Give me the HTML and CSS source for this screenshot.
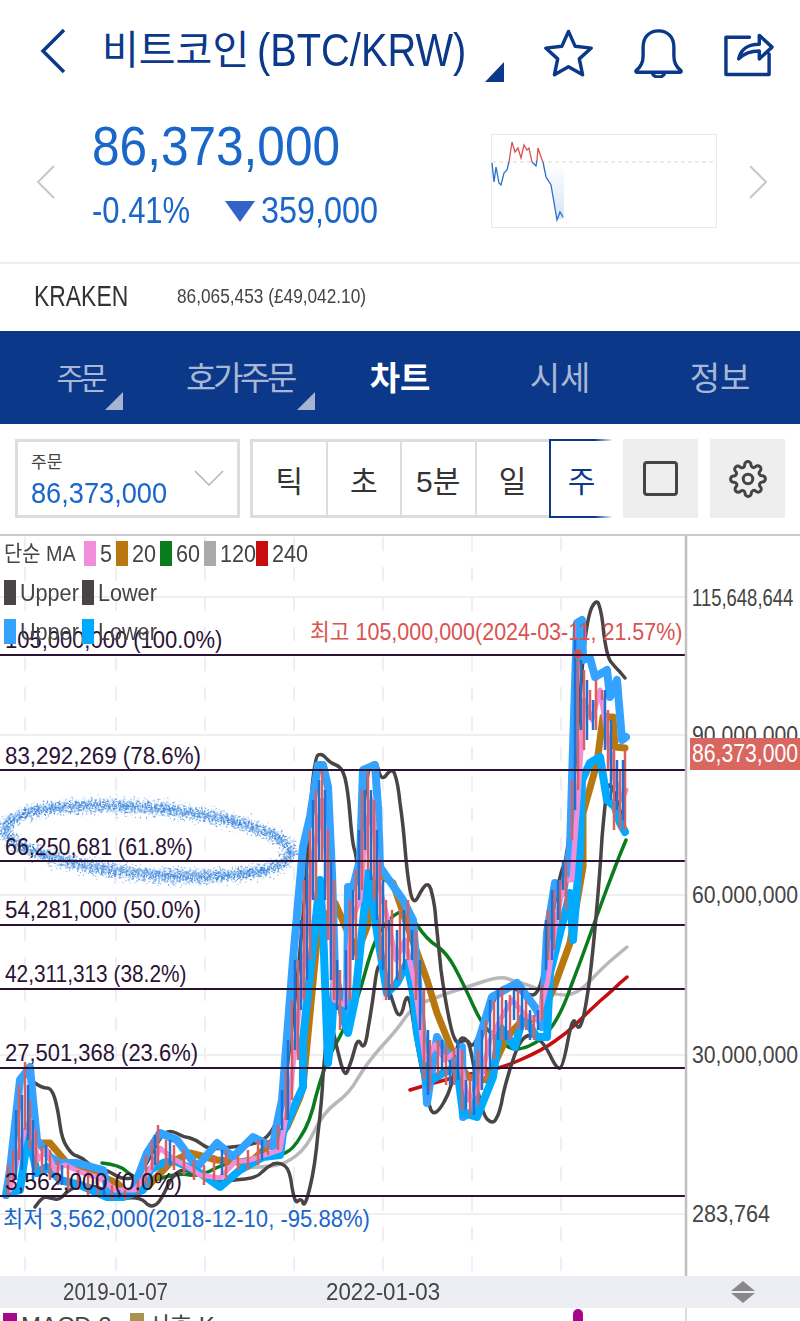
FILE: index.html
```html
<!DOCTYPE html>
<html lang="ko">
<head>
<meta charset="utf-8">
<title>비트코인(BTC/KRW)</title>
<link rel="stylesheet" href="styles.css">
</head>
<body>
<div class="page">
  <header class="topbar">
    <svg class="back" viewBox="0 0 26 46"><path d="M24 2 3 23l21 21"/></svg>
    <h1 class="title">비트코인<span class="t-en">(BTC/KRW)</span></h1>
    <span class="corner corner-title"></span>
    <div class="top-icons">
      <svg class="ic" viewBox="0 0 52 50"><path d="M26 3l6.800 15.200 16.400 1.800-12.200 11 3.400 16.200L26 39l-14.400 8.200L15 31 2.800 20l16.400-1.800z"/></svg>
      <svg class="ic" viewBox="0 0 52 52"><path d="M3 44c5-4 7-9 7-15v-9C10 10 16 3 26 3s16 7 16 17v9c0 6 2 11 7 15 1 1 .5 2-1 2H4c-1.500 0-2-1-1-2zM19 46c1 3 3 5 7 5s6-2 7-5"/></svg>
      <svg class="ic" viewBox="0 0 52 50"><path d="M27 9H3v38h44V26M16 31c2-10 10-15 21-15V7l13 12-13 12v-8c-9 0-15 2-21 8z"/></svg>
    </div>
  </header>

  <section class="quote">
    <svg class="nav-arrow" viewBox="0 0 20 34"><path d="M18 1 2 17l16 16"/></svg>
    <div class="quote-main">
      <div class="price"><span class="price-num">86,373,000</span></div>
      <div class="delta">
        <span class="pct">-0.41%</span>
        <span class="down"></span>
        <span class="amt">359,000</span>
      </div>
    </div>
    <svg class="spark" viewBox="491 134 226 94">
      <defs><linearGradient id="sg" x1="0" y1="0" x2="0" y2="1"><stop offset="0" stop-color="#fff"/><stop offset="1" stop-color="#d5e5f7"/></linearGradient></defs>
      <rect x="491.500" y="134.500" width="225" height="93" fill="#fff" stroke="#e9e9e9"/>
      <path d="M544 163H564V219H557L551 186 546 177z" fill="url(#sg)"/>
      <path d="M492 162H716" stroke="#e6e6e6" stroke-width="1.500" stroke-dasharray="4 3" fill="none"/>
      <path d="M492 163 494 182 496 167 499 183 501 185 504 173 507 170 509 162M532 162 536 166 537 160M543 162 546 177 551 185 557 220 560 212 563 217" stroke="#2a6fcb" stroke-width="1.300" fill="none"/>
      <path d="M509 162 512 142 515 152 518 148 521 158 524 145 527 150 529 148 532 162M537 160 538 148 541 157 543 162" stroke="#d9534f" stroke-width="1.300" fill="none"/>
    </svg>
    <svg class="nav-arrow nav-next" viewBox="0 0 20 34"><path d="M2 1l16 16L2 33"/></svg>
  </section>

  <section class="exchange">
    <span class="ex-name">KRAKEN</span>
    <span class="ex-val">86,065,453 (£49,042.10)</span>
  </section>

  <nav class="tabs">
    <div class="tab tab-first">주문<span class="corner corner-tab"></span></div>
    <div class="tab tab-second">호가주문<span class="corner corner-tab"></span></div>
    <div class="tab active">차트</div>
    <div class="tab">시세</div>
    <div class="tab">정보</div>
  </nav>

  <section class="toolbar">
    <div class="select">
      <div class="sel-text">
        <div class="sel-label">주문</div>
        <div class="sel-price">86,373,000</div>
      </div>
      <svg class="sel-chev" viewBox="0 0 30 17"><path d="M1 1l14 14L29 1"/></svg>
    </div>
    <div class="periods">
      <div class="period">틱</div>
      <div class="period">초</div>
      <div class="period">5분</div>
      <div class="period">일</div>
      <div class="period on">주</div>
    </div>
    <div class="tool"><span class="square"></span></div>
    <div class="tool">
      <svg class="gear" viewBox="0 0 24 24"><circle cx="12" cy="12" r="3"/><path d="M19.400 15a1.650 1.650 0 0 0 .33 1.820l.06.06a2 2 0 1 1-2.830 2.830l-.06-.06a1.650 1.650 0 0 0-2.800 1.170V21a2 2 0 0 1-4 0v-.09A1.650 1.650 0 0 0 7.300 19.740l-.06.06a2 2 0 1 1-2.830-2.830l.06-.06a1.650 1.650 0 0 0-1.170-2.800H3a2 2 0 0 1 0-4h.09A1.650 1.650 0 0 0 4.260 7.300l-.06-.06a2 2 0 1 1 2.830-2.830l.06.06a1.650 1.650 0 0 0 2.800-1.170V3a2 2 0 0 1 4 0v.09a1.650 1.650 0 0 0 2.800 1.170l.06-.06a2 2 0 1 1 2.830 2.830l-.06.06a1.650 1.650 0 0 0 1.170 2.800H21a2 2 0 0 1 0 4h-.09a1.650 1.650 0 0 0-1.510 1z"/></svg>
    </div>
  </section>

  <section class="chart">
    <svg class="plot" viewBox="0 536 800 740">
      <defs>
        <filter id="spray" filterUnits="userSpaceOnUse" x="-30" y="770" width="360" height="140">
          <feTurbulence type="fractalNoise" baseFrequency="0.5" numOctaves="2" seed="7"/>
          <feDisplacementMap in="SourceGraphic" scale="22" xChannelSelector="R" yChannelSelector="G"/>
        </filter>
      </defs>
      <g class="grid-h">
        <path d="M0 597H685M0 735H685M0 895H685M0 1055H685M0 1214H685"/>
      </g>
      <g class="grid-v">
        <path d="M25 537V1276M116 537V1276M205 537V1276M294 537V1276M383 537V1276M472 537V1276M561 537V1276"/>
      </g>

      <g class="spray" filter="url(#spray)" transform="rotate(5 148 841)">
        <ellipse cx="148" cy="841" rx="139" ry="29" class="s1"/>
        <ellipse cx="148" cy="841" rx="142" ry="32" class="s2"/>
        <ellipse cx="148" cy="841" rx="145" ry="35" class="s3"/>
        <ellipse cx="148" cy="841" rx="148" ry="38" class="s4"/>
      </g>

      <path class="ma120" d="M240 1168Q267 1167 277 1165Q287 1163 297 1155Q307 1147 315 1130Q323 1113 336 1103Q350 1093 358 1078Q367 1063 382 1046Q397 1030 405 1018Q413 1007 421 1003Q430 1000 448 993Q467 987 482 982Q497 977 505 978Q513 980 533 987Q553 995 565 995Q577 995 590 981Q603 967 615 957L627 947"/>
      <path class="ma240" d="M410 1090Q453 1077 475 1073Q497 1070 520 1060Q543 1050 555 1041Q567 1033 577 1023Q587 1013 600 1001Q613 990 620 983L627 977"/>
      <path class="ma60" d="M102 1163Q120 1165 126 1171Q133 1177 141 1179Q150 1182 165 1177Q180 1173 190 1175Q200 1177 216 1168Q233 1160 255 1158Q277 1157 285 1153Q293 1150 301 1136Q310 1123 316 1096Q323 1070 331 1053Q340 1037 348 1020Q357 1003 365 973Q373 943 381 930Q390 917 398 913Q407 910 417 925Q427 940 437 946Q447 953 455 968Q463 983 473 1005Q483 1027 491 1033Q500 1040 507 1046Q515 1052 529 1046Q543 1040 553 1025Q563 1010 571 986Q580 963 590 935Q600 907 606 891Q612 875 619 857L626 840"/>
      <polyline class="ma20" points="33,1143 50,1143 67,1163 93,1173 117,1183 127,1193 147,1187 170,1163 190,1153 217,1160 250,1163 287,1127 300,1097 303,1087 318,930 335,903 357,953 367,927 377,873 393,883 410,933 427,980 437,1013 453,1053 468,1077 487,1080 507,1037 520,1023 540,1017 553,990 570,943 583,867 583,813 597,763 603,717 613,717 615,747 625,748"/>
      <path class="band-d" d="M35 1083Q42 1088 47 1088Q52 1088 55 1099Q58 1110 60 1125Q62 1140 67 1147Q72 1155 77 1156Q83 1158 88 1163Q93 1168 100 1169Q107 1170 115 1175Q123 1180 131 1178Q140 1177 150 1157Q160 1137 165 1133Q170 1130 176 1133Q183 1137 190 1138Q197 1140 203 1145Q210 1150 221 1148Q233 1147 241 1146Q250 1145 258 1142Q267 1140 275 1125Q283 1110 291 1035Q300 960 305 890Q310 820 312 788Q315 757 318 755Q322 753 326 758Q330 763 336 765Q342 767 345 778Q348 790 350 815Q352 840 354 848Q357 857 357 870Q357 883 359 851Q362 820 365 795Q368 770 370 766Q372 763 374 763Q377 763 379 772Q382 782 387 774Q393 767 395 775Q398 783 400 803Q403 823 405 848Q407 873 410 890Q413 907 418 897Q423 887 426 885Q430 883 432 894Q435 905 436 922Q438 940 441 970Q445 1000 450 1023Q455 1047 461 1042Q467 1038 470 1044Q473 1050 481 1030Q490 1010 496 996Q503 983 513 988Q523 993 531 995Q540 997 545 963Q550 930 555 901Q560 873 564 865Q568 857 574 778Q580 700 583 658Q587 617 592 607Q597 598 599 605Q602 613 604 635Q607 657 611 662Q615 667 620 672L625 678"/>
      <path class="band-d" d="M35 1207Q42 1197 46 1197Q50 1198 55 1199Q60 1200 64 1195Q68 1190 76 1187Q85 1185 96 1187Q107 1190 112 1195Q117 1200 128 1198Q140 1197 145 1202Q150 1208 155 1205Q160 1203 168 1185Q177 1167 188 1171Q200 1175 211 1179Q223 1183 228 1181Q233 1180 245 1179Q257 1178 262 1172Q267 1167 273 1164Q280 1162 285 1166Q290 1170 292 1187Q295 1205 298 1201Q302 1198 303 1203Q305 1208 310 1187Q315 1167 318 1133Q322 1100 323 1076Q325 1053 327 1031Q330 1010 332 1025Q335 1040 340 1060Q345 1080 348 1070Q352 1060 355 1048Q358 1037 361 1044Q365 1052 368 1029Q372 1007 375 983Q378 960 381 967Q384 975 387 984Q390 993 395 1008Q400 1023 404 1005Q408 987 412 1013Q416 1040 422 1071Q428 1103 431 1110Q435 1118 444 1102Q453 1087 455 1063Q457 1040 462 1038Q467 1037 470 1048Q473 1060 477 1086Q482 1113 487 1119Q493 1125 496 1119Q500 1113 503 1095Q507 1077 515 1054Q523 1032 533 1036Q543 1040 550 1055Q557 1070 560 1068Q563 1067 568 1040Q573 1013 576 1024Q580 1035 585 1009Q590 983 595 928Q600 873 602 838Q605 803 607 790Q610 777 616 798L623 820"/>
      <polyline class="band-u" points="6,1195 10,1170 20,1080 30,1067 33,1100 37,1140 50,1157 60,1163 77,1163 103,1170 110,1197 133,1190 147,1153 160,1133 177,1140 197,1167 217,1143 233,1157 253,1137 273,1147 275,1133 282,1100 293,960 303,847 310,817 318,765 323,765 328,787 332,873 335,973 347,1027 348,887 353,887 360,860 363,770 375,765 378,807 380,867 403,900 413,920 417,973 423,1037 427,1103 437,1037 447,1053 457,1067 462,1047 463,1117 475,1110 478,1043 492,997 517,983 537,1010 542,1027 547,933 555,883 563,893 570,850 572,780 577,623 582,620 583,660 590,658 595,677 607,670 610,697 617,680 622,740 626,737"/>
      <polyline class="band-l" points="7,1193 20,1190 28,1133 37,1173 47,1167 60,1180 80,1185 107,1197 123,1197 143,1190 150,1170 163,1163 173,1160 200,1173 220,1187 240,1170 263,1157 280,1155 283,1133 297,1100 303,1087 303,1040 320,880 323,927 328,1063 332,1027 335,973 343,1017 348,1033 355,1000 368,873 375,920 387,993 397,983 407,963 413,993 417,1033 427,1083 443,1073 457,1067 463,1113 477,1117 493,1077 500,1027 515,1047 523,1017 537,1037 547,1037 550,973 570,893 573,940 580,850 582,780 590,763 600,757 607,800 615,807 620,823 625,832"/>
      <polyline class="ma5" points="10,1190 20,1150 25,1130 30,1120 38,1160 46,1150 55,1170 65,1165 80,1172 100,1178 115,1190 135,1190 150,1170 160,1148 172,1158 185,1165 200,1175 220,1178 235,1162 250,1160 265,1155 280,1150 290,1095 300,1000 305,950 312,860 318,830 322,800 326,850 330,900 334,1000 345,1005 352,920 360,900 366,830 372,800 378,880 388,920 396,960 405,940 415,985 425,1060 435,1045 445,1060 458,1050 468,1100 478,1090 490,1040 500,1020 512,1000 525,1015 538,1020 548,980 556,920 565,880 572,880 578,800 584,700 592,720 600,690 608,740 615,780 622,800 626,790"/>
      <path class="candle-r" d="M8 1195V1165M13 1180V1150M19 1160V1085M25 1130V1062M30 1150V1100M36 1170V1130M42 1175V1145M50 1180V1150M58 1185V1160M68 1190V1165M78 1190V1170M88 1195V1170M98 1195V1178M112 1200V1185M125 1200V1190M138 1195V1180M146 1185V1155M152 1170V1140M158 1165V1125M166 1170V1140M174 1170V1145M184 1175V1150M194 1180V1160M204 1185V1165M214 1180V1155M226 1180V1150M238 1170V1155M248 1170V1150M258 1165V1140M268 1155V1140M278 1150V1125M286 1120V1070M292 1100V1000M298 1060V960M304 1000V880M310 960V830M316 900V790M322 860V770M328 940V830M334 1000V880M340 1030V970M350 1000V900M356 960V870M362 890V790M368 870V770M374 900V800M380 960V860M386 1000V900M392 990V910M400 980V910M408 960V900M416 1000V930M424 1080V990M430 1090V1040M438 1075V1040M446 1085V1045M454 1085V1050M462 1110V1050M470 1115V1075M478 1105V1050M486 1080V1020M494 1060V1000M502 1040V990M510 1040V995M518 1030V990M526 1030V1000M534 1040V1015M542 1020V985M548 960V910M554 950V890M560 920V880M566 910V860M572 840V780M578 790V660M584 750V670M590 720V690M596 730V680M602 700V690M608 770V710M614 830V750M620 830V770M625 830V750"/>
      <path class="candle-b" d="M16 1180V1110M22 1170V1095M28 1140V1085M33 1180V1120M46 1170V1145M62 1185V1165M104 1195V1180M119 1198V1190M155 1165V1135M170 1165V1140M222 1175V1150M262 1160V1140M282 1130V1090M288 1120V1040M295 1050V960M301 1010V920M307 980V860M313 900V800M319 860V780M325 900V790M331 980V860M337 1010V960M346 1010V950M353 960V890M359 900V830M365 850V790M371 880V790M377 920V830M383 970V880M389 1000V920M397 980V930M404 970V910M412 960V930M420 1030V960M428 1095V1030M442 1070V1040M450 1085V1060M458 1080V1040M466 1110V1080M474 1115V1060M482 1090V1030M490 1070V1000M498 1040V990M506 1040V1000M514 1020V990M522 1030V990M530 1040V1010M538 1030V1010M546 970V920M552 960V890M558 920V880M563 890V860M575 810V640M581 730V660M587 740V680M593 730V700M605 750V690M611 800V720M617 810V760M623 820V760"/>
      <circle class="peak" cx="578" cy="654" r="4.500"/>
      <g class="fib">
        <path d="M0 655H685M0 770H685M0 861H685M0 925H685M0 989H685M0 1068H685M0 1196H685"/>
      </g>

      <g class="lbl-fib">
        <text transform="translate(5 648) scale(.915 1)">105,000,000 (100.0%)</text>
        <text transform="translate(5 764) scale(.93 1)">83,292,269 (78.6%)</text>
        <text transform="translate(5 855) scale(.892 1)">66,250,681 (61.8%)</text>
        <text transform="translate(5 918) scale(.93 1)">54,281,000 (50.0%)</text>
        <text transform="translate(5 982) scale(.868 1)">42,311,313 (38.2%)</text>
        <text transform="translate(5 1061) scale(.916 1)">27,501,368 (23.6%)</text>
        <text transform="translate(5 1190) scale(.962 1)">3,562,000 (0.0%)</text>
      </g>
      <text class="lbl-high" transform="translate(310 640) scale(.935 1)">최고 105,000,000(2024-03-11, 21.57%)</text>
      <text class="lbl-low" transform="translate(3 1227) scale(.96 1)">최저 3,562,000(2018-12-10, -95.88%)</text>

      <path class="axis-line" d="M686 536V1276"/>
      <g class="lbl-axis">
        <text transform="translate(692 606) scale(.77 1)">115,648,644</text>
        <text transform="translate(692 743) scale(.883 1)">90,000,000</text>
        <text transform="translate(692 903) scale(.883 1)">60,000,000</text>
        <text transform="translate(692 1063) scale(.883 1)">30,000,000</text>
        <text transform="translate(692 1222) scale(.9 1)">283,764</text>
      </g>
      <rect class="tag" x="690" y="738" width="110" height="32"/>
      <text class="tag-text" transform="translate(692 762) scale(.848 1)">86,373,000</text>
    </svg>

    <div class="legend">
      <div class="lg-row">
        <span class="lg-cell w-first"><span class="lg-txt lg-first">단순 MA</span></span>
        <i class="sw c-pink"></i><span class="lg-cell w1"><span class="lg-txt">5</span></span>
        <i class="sw c-brown"></i><span class="lg-cell w2"><span class="lg-txt">20</span></span>
        <i class="sw c-green"></i><span class="lg-cell w2"><span class="lg-txt">60</span></span>
        <i class="sw c-gray"></i><span class="lg-cell w3"><span class="lg-txt">120</span></span>
        <i class="sw c-red"></i><span class="lg-cell w3"><span class="lg-txt">240</span></span>
      </div>
      <div class="lg-row">
        <i class="sw c-dark"></i><span class="lg-cell w-band"><span class="lg-txt">Upper</span></span>
        <i class="sw c-dark"></i><span class="lg-cell w-band"><span class="lg-txt">Lower</span></span>
      </div>
      <div class="lg-row">
        <i class="sw c-sky"></i><span class="lg-cell w-band"><span class="lg-txt">Upper</span></span>
        <i class="sw c-cyan"></i><span class="lg-cell w-band"><span class="lg-txt">Lower</span></span>
      </div>
    </div>
  </section>

  <section class="timeaxis">
    <span class="date date-1">2019-01-07</span>
    <span class="date date-2">2022-01-03</span>
    <span class="updown"><i class="up"></i><i class="dn"></i></span>
  </section>

  <section class="sub">
    <i class="sub-sw c-purple"></i><span class="sub-txt">MACD 2 </span>
    <i class="sub-sw c-olive"></i><span class="sub-txt">시호 K</span>
    <span class="sub-mark"></span>
    <span class="sub-axis"></span>
  </section>
</div>
</body>
</html>
```

FILE: styles.css
```css
* { box-sizing: border-box; }
html, body { margin: 0; padding: 0; background: #fff; }
body { font-family: "Liberation Sans", "Noto Sans CJK KR", sans-serif; }
.page { width: 800px; height: 1321px; overflow: hidden; display: flex; flex-direction: column; }
.page > * { flex: none; }

.topbar { height: 105px; display: flex; align-items: flex-start; padding: 28px 25px 0 40px; }
.back { width: 26px; height: 46px; flex: none; }
.back path { fill: none; stroke: #0b3888; stroke-width: 3.500; }
.title { margin: -5px 0 0 36px; font-size: 40px; font-weight: 400; color: #0b3888; line-height: 54px; white-space: nowrap; flex: 0 0 383px; width: 383px; display: flex; align-items: center; }
.t-en { font-size: 46px; margin-left: 8px; flex: none; transform: scaleX(.865); transform-origin: left center; }
.corner { display: block; width: 0; height: 0; border-style: solid; border-width: 0 0 20px 19px; border-color: transparent transparent #0b3888 transparent; }
.corner-title { flex: none; margin: 34px 39px 0 0; }
.top-icons { display: flex; gap: 39px; }
.ic { width: 51px; height: 50px; flex: none; }
.ic path { fill: none; stroke: #0b3888; stroke-width: 3.500; stroke-linejoin: round; stroke-linecap: round; }

.quote { height: 159px; border-bottom: 2px solid #eeeeee; display: flex; align-items: flex-start; padding: 0 32px 0 36px; }
.nav-arrow { width: 20px; height: 34px; margin-top: 60px; flex: none; }
.nav-arrow path { fill: none; stroke: #c8c8c8; stroke-width: 2; }
.nav-next { margin-left: 31px; }
.quote-main { width: 435px; padding: 9px 0 0 36px; flex: none; }
.price { height: 64px; white-space: nowrap; }
.price-num { font-size: 56px; line-height: 64px; color: #1a66c9; display: inline-block; transform: scaleX(.885); transform-origin: left center; }
.delta { display: flex; align-items: center; margin-top: 13px; color: #1a66c9; height: 40px; white-space: nowrap; }
.pct { width: 133px; flex: none; font-size: 36px; display: inline-block; transform: scaleX(.86); transform-origin: left center; }
.down { width: 0; height: 0; flex: none; border-style: solid; border-width: 21px 15.500px 0; border-color: #3363c9 transparent transparent; margin-right: 6px; }
.amt { font-size: 37px; display: inline-block; transform: scaleX(.875); transform-origin: left center; }
.spark { width: 226px; height: 94px; margin-top: 29px; flex: none; }

.exchange { height: 67px; display: flex; align-items: center; padding: 0 0 2px 34px; color: #333; }
.ex-name { width: 143px; flex: none; font-size: 29px; display: inline-block; transform: scaleX(.79); transform-origin: left center; }
.ex-val { font-size: 20px; color: #444; display: inline-block; white-space: nowrap; transform: scaleX(.863); transform-origin: left center; }

.tabs { height: 93px; background: #0b3888; display: grid; grid-template-columns: repeat(5, 160px); align-items: center; padding-top: 3px; }
.tab { text-align: center; font-size: 33px; line-height: 46px; color: #a8b7d5; position: relative; }
.tab-first { font-size: 30px; letter-spacing: -4px; }
.tab-second { letter-spacing: -3.400px; }
.tab.active { color: #fff; font-weight: 700; }
.corner-tab { position: absolute; border-bottom-color: #a5b4d3; border-width: 0 0 18px 18px; top: 36px; left: 105px; }
.tab:nth-child(2) .corner-tab { left: 137px; }

.toolbar { height: 110px; display: flex; align-items: flex-start; padding: 15px 15px 0; }
.select { width: 225px; height: 79px; border: 3px solid #dddddd; display: flex; justify-content: space-between; padding: 9px 13px 0 13px; flex: none; }
.sel-text { width: 150px; flex: none; }
.sel-label { font-size: 17px; line-height: 24px; color: #444; }
.sel-price { font-size: 30px; line-height: 36px; color: #1a66c9; white-space: nowrap; transform: scaleX(.906); transform-origin: left center; }
.sel-chev { width: 30px; height: 17px; margin-top: 19px; flex: none; }
.sel-chev path { fill: none; stroke: #b5b5b5; stroke-width: 1.500; }
.periods { margin-left: 10px; width: 362px; height: 79px; display: flex; border: 3px solid #dddde0; border-right: 0; flex: none; }
.period { width: 74.500px; flex: none; display: flex; align-items: center; justify-content: center; font-size: 30px; color: #333; border-right: 2px solid #dddde0; background: #fff; }
.period:nth-child(4) { width: 72px; border-right: 0; }
.period.on { width: 64px; margin: -3px 0; color: #0b3888; border: 0; border-left: 2px solid #0b3888; background: linear-gradient(90deg, #0b3888 0, #0b3888 70%, #fff 100%) top left / 100% 2px no-repeat, linear-gradient(90deg, #0b3888 0, #0b3888 70%, #fff 100%) bottom left / 100% 2px no-repeat, #fff; }
.tool { width: 75px; height: 79px; background: #eeeeee; margin-left: 11px; display: flex; align-items: center; justify-content: center; flex: none; }
.tool + .tool { margin-left: 12px; }
.square { width: 35px; height: 35px; border: 3px solid #444; border-radius: 4px; display: block; }
.gear { width: 38px; height: 38px; }
.gear circle, .gear path { fill: none; stroke: #444; stroke-width: 1.900; }

.chart { height: 742px; border-top: 2px solid #cccccc; position: relative; }
.plot { width: 800px; height: 740px; display: block; }
.plot polyline, .ma120, .ma240, .ma60, .band-d { fill: none; stroke-linejoin: round; stroke-linecap: round; }
.grid-h path { stroke: #efeff2; stroke-width: 2; fill: none; }
.grid-v path { stroke: #eeeef3; stroke-width: 2; stroke-dasharray: 14 16; fill: none; }
.spray ellipse { fill: none; stroke: #2477d8; }
.s1 { stroke-width: 4; stroke-dasharray: 1.500 1.500; opacity: .7; }
.s2 { stroke-width: 5; stroke-dasharray: 1.500 1.500; opacity: .85; }
.s3 { stroke-width: 5; stroke-dasharray: 1.500 1.500; stroke-dashoffset: 1; opacity: .85; }
.s4 { stroke-width: 4; stroke-dasharray: 1 2; opacity: .7; }
.ma120 { stroke: #b8b8b8; stroke-width: 3.500; }
.ma240 { stroke: #c70d0d; stroke-width: 3.500; }
.ma60 { stroke: #0b7c1e; stroke-width: 3.500; }
.ma20 { stroke: #b8780f; stroke-width: 7; }
.band-d { stroke: #4a4444; stroke-width: 3.500; }
.band-u { stroke: #33a3ff; stroke-width: 8; }
.band-l { stroke: #00aaff; stroke-width: 8; }
.ma5 { stroke: #f18edb; stroke-width: 5; }
.candle-r { stroke: #d9605c; stroke-width: 2.500; fill: none; }
.candle-b { stroke: #1f70d2; stroke-width: 2.500; fill: none; }
.peak { fill: #d9534f; }
.fib path { stroke: #2a1235; stroke-width: 2; fill: none; }
.lbl-fib text { font-size: 24px; fill: #2a1235; }
.lbl-high { font-size: 23px; fill: #d9534f; }
.lbl-low { font-size: 23px; fill: #1a66c9; }
.axis-line { stroke: #c0c0c0; stroke-width: 2.500; fill: none; }
.lbl-axis text { font-size: 24px; fill: #444; }
.tag { fill: #d9665f; }
.tag-text { font-size: 25px; fill: #fff; }

.legend { position: absolute; left: 4px; top: 5px; display: flex; flex-direction: column; gap: 14px; }
.lg-row { height: 25px; display: flex; align-items: center; }
.lg-cell { display: block; flex: none; margin-right: 4px; }
.w-first { width: 76px; }
.w1 { width: 12px; }
.w2 { width: 24px; }
.w3 { width: 32px; }
.w-band { width: 58px; }
.lg-txt { display: block; font-size: 24px; line-height: 25px; color: #444; white-space: nowrap; transform: scaleX(.9); transform-origin: left center; }
.lg-first { font-size: 22px; }
.sw { display: block; width: 12px; height: 25px; margin-right: 4px; flex: none; }
.c-pink { background: #f18edb; }
.c-brown { background: #b8780f; }
.c-green { background: #0b7c1e; }
.c-gray { background: #aaaaaa; }
.c-red { background: #c70d0d; }
.c-dark { background: #4a4444; }
.c-sky { background: #33a3ff; }
.c-cyan { background: #00aaff; }
.c-purple { background: #a6078b; }
.c-olive { background: #a89450; }

.timeaxis { height: 32px; background: #eceef3; position: relative; }
.date { position: absolute; top: 0; line-height: 32px; font-size: 24px; color: #444; white-space: nowrap; transform-origin: left center; }
.date-1 { left: 63px; transform: scaleX(.855); }
.date-2 { left: 326px; transform: scaleX(.93); }
.updown { position: absolute; left: 731px; top: 5px; display: flex; flex-direction: column; gap: 2px; }
.up, .dn { display: block; width: 0; height: 0; border-style: solid; border-color: transparent; }
.up { border-width: 0 12.500px 10px; border-bottom-color: #888; }
.dn { border-width: 10px 12.500px 0; border-top-color: #888; }

.sub { height: 13px; overflow: hidden; position: relative; display: flex; align-items: flex-start; padding: 5px 0 0 3px; }
.sub-sw { display: block; width: 14px; height: 25px; margin-right: 4px; flex: none; }
.sub-txt { font-size: 24px; line-height: 25px; color: #444; width: 109px; flex: none; }
.sub-mark { position: absolute; left: 573px; top: 1px; width: 10px; height: 14px; background: #a6078b; border-radius: 5px 5px 0 0; }
.sub-axis { position: absolute; left: 685px; top: 0; bottom: 0; width: 2px; background: #dddddd; }
```
